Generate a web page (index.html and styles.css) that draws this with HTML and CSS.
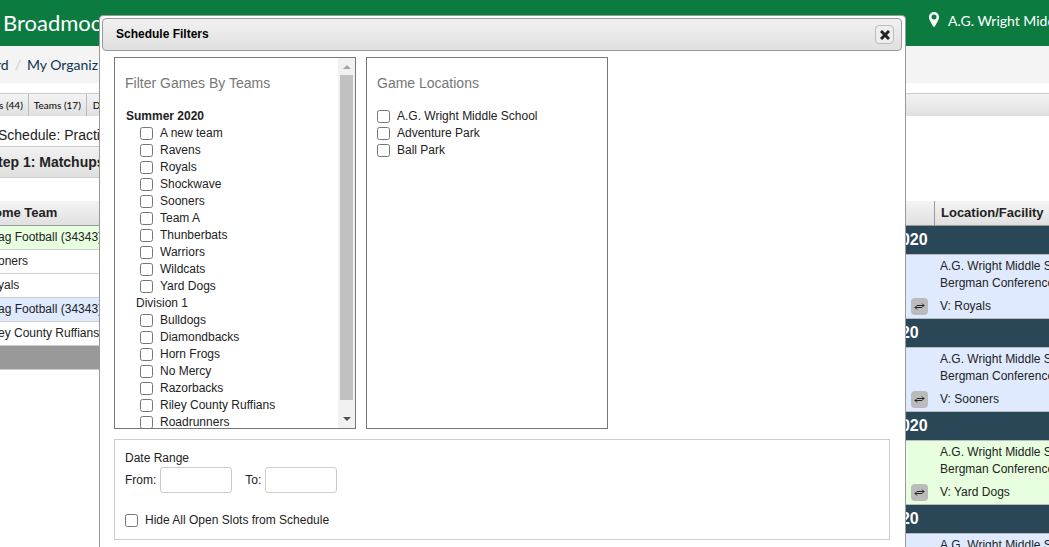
FILE: index.html
```html
<!DOCTYPE html>
<html lang="en">
<head>
    <meta charset="UTF-8">
    <meta name="viewport" content="width=device-width, initial-scale=1.0">
    <title>Schedule Filters</title>
    <link rel="stylesheet" href="styles.css">
</head>
<body>
    <header class="site-header">
        <a class="org-name" href="#">Broadmoor</a>
        <a class="location" href="#">
            <svg width="10" height="15" viewBox="0 0 10 15"><path fill="#fff" fill-rule="evenodd" d="M5 0a5 5 0 0 1 5 5c0 2-.7 3-1.300 4.300L6 14.300a1.100 1.100 0 0 1-2 0L1.300 9.300C.7 8 0 7 0 5a5 5 0 0 1 5-5zm0 2.500a2.500 2.500 0 1 0 0 5 2.500 2.500 0 0 0 0-5z"/></svg>
            <span>A.G. Wright Middle</span>
        </a>
    </header>

    <nav class="breadcrumb">
        <a href="#">rd</a>
        <span class="slash">/</span>
        <a href="#">My Organiz</a>
    </nav>

    <nav class="tabs">
        <a href="#">s (44)</a>
        <a href="#">Teams (17)</a>
        <a href="#">D</a>
    </nav>

    <main class="content">
        <section class="matchups">
            <h1 class="page-title">Schedule: Practi</h1>
            <h2 class="step-title">tep 1: Matchups</h2>
            <table class="teams-table">
                <thead>
                    <tr><th>ome Team</th></tr>
                </thead>
                <tbody>
                    <tr class="green"><td>ag Football (34343)</td></tr>
                    <tr><td>oners</td></tr>
                    <tr><td>yals</td></tr>
                    <tr class="blue"><td>ag Football (34343)</td></tr>
                    <tr><td>ey County Ruffians</td></tr>
                </tbody>
                <tfoot>
                    <tr><td></td></tr>
                </tfoot>
            </table>
        </section>

        <section class="slots">
            <table class="slots-table">
                <thead>
                    <tr><th class="swap-col"></th><th>Location/Facility</th></tr>
                </thead>
                <tbody>
                    <tr class="date"><td colspan="2">2020</td></tr>
                    <tr class="slot blue">
                        <td class="swap-col"><button class="swap-btn" aria-label="Swap"><svg width="11" height="7" viewBox="0 0 11 7"><path fill="none" stroke="#222" d="M3 2.500h7M8 .5l2 2-2 2M8 4.500H1M3 2.500l-2 2 2 2"/></svg></button></td>
                        <td><p>A.G. Wright Middle School<br>Bergman Conference</p><p>V: Royals</p></td>
                    </tr>
                    <tr class="date"><td colspan="2">020</td></tr>
                    <tr class="slot blue">
                        <td class="swap-col"><button class="swap-btn" aria-label="Swap"><svg width="11" height="7" viewBox="0 0 11 7"><path fill="none" stroke="#222" d="M3 2.500h7M8 .5l2 2-2 2M8 4.500H1M3 2.500l-2 2 2 2"/></svg></button></td>
                        <td><p>A.G. Wright Middle School<br>Bergman Conference</p><p>V: Sooners</p></td>
                    </tr>
                    <tr class="date"><td colspan="2">2020</td></tr>
                    <tr class="slot green">
                        <td class="swap-col"><button class="swap-btn" aria-label="Swap"><svg width="11" height="7" viewBox="0 0 11 7"><path fill="none" stroke="#222" d="M3 2.500h7M8 .5l2 2-2 2M8 4.500H1M3 2.500l-2 2 2 2"/></svg></button></td>
                        <td><p>A.G. Wright Middle School<br>Bergman Conference</p><p>V: Yard Dogs</p></td>
                    </tr>
                    <tr class="date"><td colspan="2">020</td></tr>
                    <tr class="slot blue">
                        <td class="swap-col"></td>
                        <td><p>A.G. Wright Middle School</p></td>
                    </tr>
                </tbody>
            </table>
        </section>
    </main>

    <div class="dialog" role="dialog" aria-labelledby="dialogTitle">
        <div class="dialog-titlebar">
            <span id="dialogTitle">Schedule Filters</span>
            <button class="close-btn" aria-label="Close">
                <svg width="10" height="10" viewBox="0 0 10 10"><path fill="none" stroke="#222" stroke-width="3" d="M1 1l8 8M9 1L1 9"/></svg>
            </button>
        </div>

        <div class="dialog-body">
            <div class="panels">
                <div class="panel">
                    <div class="panel-content">
                        <h3>Filter Games By Teams</h3>
                        <strong class="season">Summer 2020</strong>
                        <ul class="team-list">
                            <li><label><input type="checkbox">A new team</label></li>
                            <li><label><input type="checkbox">Ravens</label></li>
                            <li><label><input type="checkbox">Royals</label></li>
                            <li><label><input type="checkbox">Shockwave</label></li>
                            <li><label><input type="checkbox">Sooners</label></li>
                            <li><label><input type="checkbox">Team A</label></li>
                            <li><label><input type="checkbox">Thunberbats</label></li>
                            <li><label><input type="checkbox">Warriors</label></li>
                            <li><label><input type="checkbox">Wildcats</label></li>
                            <li><label><input type="checkbox">Yard Dogs</label></li>
                        </ul>
                        <div class="division">Division 1</div>
                        <ul class="team-list">
                            <li><label><input type="checkbox">Bulldogs</label></li>
                            <li><label><input type="checkbox">Diamondbacks</label></li>
                            <li><label><input type="checkbox">Horn Frogs</label></li>
                            <li><label><input type="checkbox">No Mercy</label></li>
                            <li><label><input type="checkbox">Razorbacks</label></li>
                            <li><label><input type="checkbox">Riley County Ruffians</label></li>
                            <li><label><input type="checkbox">Roadrunners</label></li>
                        </ul>
                    </div>
                    <div class="scrollbar">
                        <span class="arrow-up"></span>
                        <span class="thumb"></span>
                        <span class="arrow-down"></span>
                    </div>
                </div>

                <div class="panel">
                    <div class="panel-content">
                        <h3>Game Locations</h3>
                        <ul>
                            <li><label><input type="checkbox">A.G. Wright Middle School</label></li>
                            <li><label><input type="checkbox">Adventure Park</label></li>
                            <li><label><input type="checkbox">Ball Park</label></li>
                        </ul>
                    </div>
                </div>
            </div>

            <div class="options">
                <div>Date Range</div>
                <div class="date-range">
                    <label for="dateFrom">From:</label>
                    <input type="text" id="dateFrom">
                    <label class="to" for="dateTo">To:</label>
                    <input type="text" id="dateTo">
                </div>
                <label class="hide-open"><input type="checkbox">Hide All Open Slots from Schedule</label>
            </div>
        </div>
    </div>
</body>
</html>
```
FILE: styles.css
```css
* {
    box-sizing: border-box;
}

body {
    margin: 0;
    font-family: "Liberation Sans", Arial, sans-serif;
    font-size: 12px;
    line-height: 17px;
    color: #222;
    background: #fff;
    overflow: hidden;
}

a {
    color: inherit;
    text-decoration: none;
}

h1, h2, h3, p, ul {
    margin: 0;
    padding: 0;
}

ul {
    list-style: none;
}

/* page header */
.site-header {
    display: flex;
    justify-content: space-between;
    height: 46px;
    padding-left: 3px;
    background: #0b7b40;
    color: #fff;
    font-family: Lato, sans-serif;
    white-space: nowrap;
}

.org-name {
    font-size: 22px;
    line-height: 46px;
}

.location {
    display: flex;
    flex: 0 0 120px;
    gap: 9px;
    min-width: 0;
    padding-top: 12px;
    font-size: 14px;
}

.location svg {
    flex-shrink: 0;
}

.breadcrumb {
    display: flex;
    gap: 6px;
    height: 37px;
    margin-left: -4px;
    background: #f4f4f4;
    color: #0c3553;
    font-family: Lato, sans-serif;
    font-size: 14px;
    line-height: 38px;
}

.breadcrumb .slash {
    color: #ccc;
}

.tabs {
    display: flex;
    margin: 10px 0 0 -1px;
    border-top: 1px solid #ccc;
    background: linear-gradient(#f3f3f3, #e0e0e0);
    color: #000;
    font-family: Lato, sans-serif;
    font-size: 10px;
    line-height: 22px;
}

.tabs a {
    padding: 0 5px;
    border-right: 1px solid #bbb;
}

.tabs a:first-child {
    padding-left: 0;
}

.tabs a:last-child {
    padding-left: 6px;
    border-right: 0;
}

/* page content */
.content {
    display: flex;
    justify-content: space-between;
    white-space: nowrap;
}

.matchups {
    width: 140px;
    margin-left: -2px;
}

.page-title {
    padding-top: 9px;
    font-size: 14px;
    font-weight: normal;
    line-height: 21px;
}

.step-title {
    height: 32px;
    border: 1px solid #ccc;
    border-width: 1px 0;
    background: linear-gradient(#f1f1f1, #e0e0e0);
    font-size: 14px;
    line-height: 30px;
}

table {
    width: 100%;
    border-collapse: separate;
    border-spacing: 0;
}

th {
    height: 25px;
    padding: 0 0 2px;
    border-bottom: 1px solid #999;
    background: linear-gradient(#f4f4f4, #e0e0e0);
    font-size: 13px;
    text-align: left;
}

td {
    padding: 0;
}

.teams-table {
    margin-top: 23px;
}

.teams-table th {
    text-indent: -4px;
}

.teams-table td {
    height: 24px;
    border-bottom: 1px solid #ccc;
}

.teams-table tfoot td {
    background: #999;
}

.green {
    background: #e8ffdf;
}

.blue {
    background: #e0eaff;
}

.slots {
    width: 157px;
    padding-top: 85px;
    overflow: hidden;
}

.slots-table {
    table-layout: fixed;
}

.slots-table th {
    padding-left: 6px;
}

.slots-table .swap-col {
    width: 43px;
    padding: 0 7px 3px 0;
    text-align: right;
    vertical-align: bottom;
}

.slots-table th.swap-col {
    border-right: 1px solid #999;
}

.date td {
    height: 29px;
    padding-bottom: 2px;
    border-bottom: 1px solid #bbb;
    background: #2a4758;
    color: #fff;
    font-size: 16px;
    font-weight: bold;
}

.slot td {
    height: 64px;
    padding: 3px 0 0 5px;
    border-bottom: 1px solid #bbb;
    vertical-align: top;
}

.slot p + p {
    margin-top: 6px;
}

.swap-btn {
    display: inline-flex;
    align-items: center;
    justify-content: center;
    width: 17px;
    height: 17px;
    padding: 0;
    border: 0;
    border-radius: 4px;
    background: #bbb;
    vertical-align: bottom;
}

/* filter dialog */
.dialog {
    position: fixed;
    top: 15px;
    left: 99px;
    right: 143px;
    padding: 2px 3px 2px 2px;
    border: 1px solid #999;
    border-radius: 4px;
    background: #fff;
}

.dialog-titlebar {
    display: flex;
    align-items: center;
    justify-content: space-between;
    height: 33px;
    padding: 0 7px 0 13px;
    border: 1px solid #999;
    border-radius: 4px;
    background: linear-gradient(#f1f1f1, #e0e0e0);
    color: #000;
    font-weight: bold;
    line-height: 19px;
}

.close-btn {
    display: flex;
    align-items: center;
    justify-content: center;
    width: 19px;
    height: 19px;
    padding: 0;
    border: 1px solid #bbb;
    border-radius: 4px;
    background: #eee;
}

.dialog-body {
    padding: 6px 12px 20px 12px;
}

.panels {
    display: flex;
    gap: 10px;
}

.panel {
    display: flex;
    width: 242px;
    height: 372px;
    border: 1px solid #777;
    overflow: hidden;
}

.panel-content {
    flex: 1;
    padding: 15px 0 0 10px;
}

.panel h3 {
    margin-bottom: 15px;
    color: #777;
    font-size: 14px;
    font-weight: normal;
    line-height: 20px;
}

.season {
    display: block;
    padding-left: 1px;
}

.team-list {
    padding-left: 15px;
}

.division {
    padding-left: 11px;
}

.dialog input[type="checkbox"] {
    width: 13px;
    height: 13px;
    margin: 0;
}

.dialog li label,
.hide-open {
    display: flex;
    align-items: center;
    gap: 7px;
    height: 17px;
}

.scrollbar {
    display: flex;
    flex-direction: column;
    align-items: center;
    width: 17px;
    background: #f1f1f1;
}

.arrow-up,
.arrow-down {
    height: 4px;
    border: 4px solid transparent;
    border-top: 0;
}

.arrow-up {
    margin: 7px 0 6px;
    border-bottom-color: #a3a3a3;
}

.thumb {
    width: 13px;
    height: 325px;
    background: #c1c1c1;
}

.arrow-down {
    margin-top: 17px;
    border-top: 4px solid #505050;
    border-bottom: 0;
}

.options {
    margin-top: 10px;
    padding: 10px;
    height: 101px;
    border: 1px solid #ccc;
}

.date-range {
    display: flex;
    align-items: center;
    gap: 4px;
    margin-bottom: 19px;
}

.date-range input {
    width: 72px;
    height: 26px;
    padding: 3px;
    border: 1px solid #ccc;
    border-radius: 3px;
    font: inherit;
}

.date-range .to {
    margin-left: 9px;
}
```
